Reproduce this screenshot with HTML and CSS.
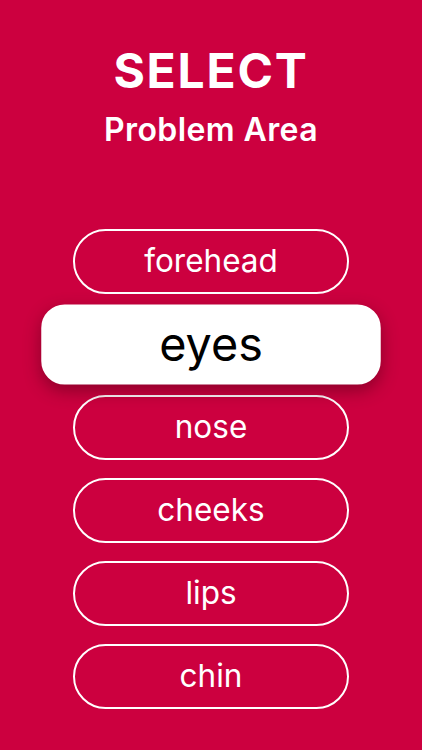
FILE: index.html
```html
<!DOCTYPE html>
<html lang="en">
<head>
<meta charset="utf-8">
<title>Select Problem Area</title>
<link rel="stylesheet" href="styles.css">
</head>
<body>
<main class="screen">
  <header class="heading">
    <h1 class="title">SELECT</h1>
    <h2 class="subtitle">Problem Area</h2>
  </header>
  <ul class="options">
    <li class="option">forehead</li>
    <li class="option option--selected">eyes</li>
    <li class="option">nose</li>
    <li class="option">cheeks</li>
    <li class="option">lips</li>
    <li class="option">chin</li>
  </ul>
</main>
</body>
</html>
```
FILE: styles.css
```css
html, body {
  margin: 0;
  padding: 0;
}
body {
  background: #cc003f;
  font-family: Inter, "Liberation Sans", Arial, sans-serif;
  color: #fff;
}
.screen {
  width: 422px;
  height: 750px;
  display: flex;
  flex-direction: column;
  align-items: center;
}
.heading {
  display: flex;
  flex-direction: column;
  align-items: center;
  padding-top: 43px;
}
.title {
  margin: 0;
  font-size: 48px;
  font-weight: 700;
  line-height: 56px;
  letter-spacing: 1.8px;
}
.subtitle {
  margin: 12px 0 0;
  font-size: 32px;
  font-weight: 600;
  line-height: 38px;
  letter-spacing: 0.4px;
}
.options {
  list-style: none;
  margin: 0;
  padding: 0;
  margin-top: 80px;
  display: flex;
  flex-direction: column;
  gap: 18px;
  align-items: center;
}
.option {
  box-sizing: border-box;
  width: 276px;
  height: 65px;
  border: 2px solid #fff;
  border-radius: 33px;
  display: flex;
  align-items: center;
  justify-content: center;
  font-size: 31.5px;
  font-weight: 400;
  letter-spacing: 0;
  padding-bottom: 2px;
}
.option--selected {
  background: #fff;
  color: #000;
  border-color: #fff;
  border-radius: 19px;
  font-size: 38px;
  transform: scale(1.23);
  box-shadow: 0 5px 14px rgba(60, 0, 15, 0.45);
}
```
